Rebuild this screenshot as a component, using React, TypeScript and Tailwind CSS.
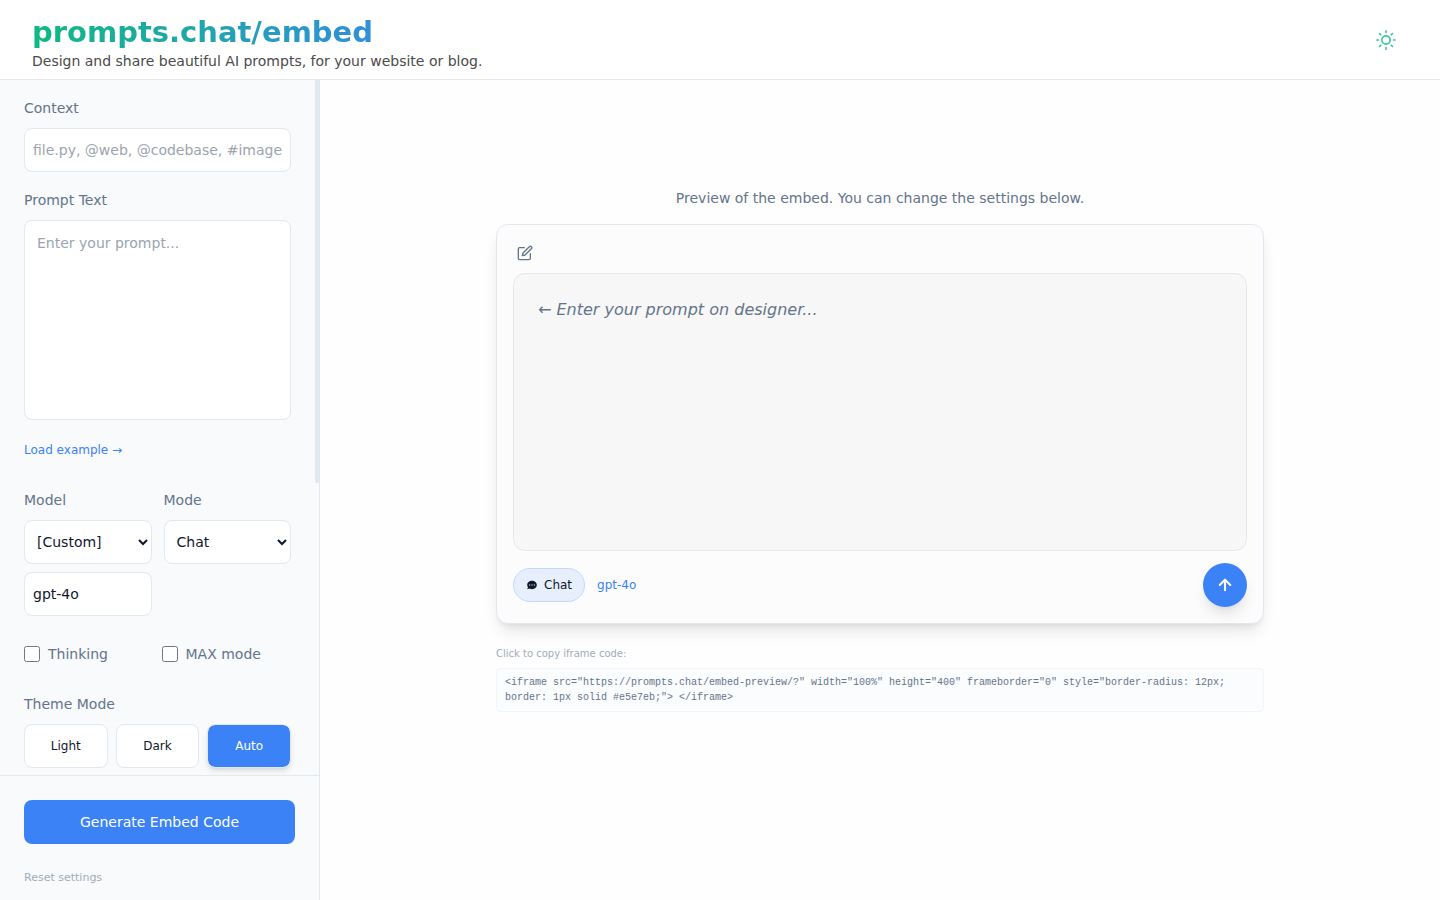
import React, { useState } from 'react';
import { ArrowUp } from 'lucide-react';
import { FiEdit, FiSun } from 'react-icons/fi';

const THEME_MODES = ['Light', 'Dark', 'Auto'];

const EMBED_CODE =
  '<iframe src="https://prompts.chat/embed-preview/?" width="100%" height="400" frameborder="0" style="border-radius: 12px; border: 1px solid #e5e7eb;"> </iframe>';

const labelClass = 'block mb-2 text-sm leading-6 text-[#64748b]';
const fieldClass =
  'block w-full h-11 rounded-lg border border-[#e2e8f0] bg-white text-sm text-[#0f172a] placeholder:text-[#9ca3af]';

function ChatIcon() {
  return (
    <svg className="h-3 w-3" viewBox="0 0 20 20" fill="currentColor" aria-hidden="true">
      <path
        fillRule="evenodd"
        clipRule="evenodd"
        d="M18 10c0 3.87-3.58 7-8 7a8.84 8.84 0 0 1-4.08-.98L2 17l1.34-3.12C2.5 12.77 2 11.43 2 10c0-3.87 3.58-7 8-7s8 3.13 8 7zM7 9H5v2h2V9zm8 0h-2v2h2V9zM9 9h2v2H9V9z"
      />
    </svg>
  );
}

function Header() {
  return (
    <header className="flex h-20 shrink-0 items-center justify-between border-b border-[#e5e7eb] bg-white px-8">
      <div className="pt-1.5">
        <h1 className="bg-[linear-gradient(to_right,#10b981,#3b82f6)] bg-clip-text text-[29px] leading-9 font-bold text-transparent">
          prompts.chat/embed
        </h1>
        <p className="text-sm leading-[22px] text-[#4a4a4a]">
          Design and share beautiful AI prompts, for your website or blog.
        </p>
      </div>
      <button aria-label="Toggle theme" className="p-3 text-[#10b981] opacity-80">
        <FiSun className="h-5 w-5" />
      </button>
    </header>
  );
}

function SettingsForm() {
  const [themeMode, setThemeMode] = useState('Auto');
  const [model, setModel] = useState('gpt-4o');

  return (
    <div className="min-w-0 flex-1 overflow-y-auto px-6 pt-4">
      <div className="mb-4">
        <label htmlFor="context" className={labelClass}>Context</label>
        <input id="context" className={`${fieldClass} px-2`} placeholder="file.py, @web, @codebase, #image" />
      </div>

      <div className="mb-5">
        <label htmlFor="prompt" className={labelClass}>Prompt Text</label>
        <textarea
          id="prompt"
          placeholder="Enter your prompt..."
          className="block h-50 w-full resize-none rounded-lg border border-[#e2e8f0] bg-white p-3 text-sm text-[#0f172a] placeholder:text-[#9ca3af]"
        />
      </div>

      <button className="mb-7 block text-xs leading-5 text-[#3b82f6]">Load example →</button>

      <div className="mb-7 grid grid-cols-2 gap-3">
        <div>
          <label htmlFor="model" className={labelClass}>Model</label>
          <select id="model" className={`${fieldClass} px-2`}>
            <option>[Custom]</option>
          </select>
          <input
            aria-label="Custom model name"
            value={model}
            onChange={(e) => setModel(e.target.value)}
            className={`${fieldClass} mt-2 px-2`}
          />
        </div>
        <div>
          <label htmlFor="mode" className={labelClass}>Mode</label>
          <select id="mode" className={`${fieldClass} px-2`}>
            <option>Chat</option>
          </select>
        </div>
      </div>

      <div className="mb-7 grid grid-cols-2 gap-2">
        <label className="flex items-center gap-2 text-sm text-[#64748b]">
          <input type="checkbox" className="h-4 w-4" />
          Thinking
        </label>
        <label className="flex items-center gap-2 text-sm text-[#64748b]">
          <input type="checkbox" className="h-4 w-4" />
          MAX mode
        </label>
      </div>

      <div className="pb-1.5">
        <span className={labelClass}>Theme Mode</span>
        <div className="grid grid-cols-3 gap-2">
          {THEME_MODES.map((mode) => (
            <button
              key={mode}
              onClick={() => setThemeMode(mode)}
              className={`h-11 rounded-lg border text-xs ${
                mode === themeMode
                  ? 'border-[#e2e8f0] bg-[#3b82f6] bg-clip-padding text-white shadow-md'
                  : 'border-[#e2e8f0] bg-white text-[#0f172a]'
              }`}
            >
              {mode}
            </button>
          ))}
        </div>
      </div>
    </div>
  );
}

function Sidebar() {
  return (
    <aside className="flex w-80 shrink-0 flex-col border-r border-[#e2e8f0] bg-[#f8fafc]">
      <div className="flex min-h-0 flex-1">
        <SettingsForm />
        {/* Slim scroll thumb */}
        <div className="w-1 shrink-0">
          <div className="h-[58%] rounded-b-sm bg-[#e2e8f0]" />
        </div>
      </div>

      <div className="border-t border-[#e2e8f0] px-6 pt-6 pb-3.5">
        <button className="h-11 w-full rounded-lg bg-[#3b82f6] text-sm text-white">Generate Embed Code</button>
        <button className="mt-6.5 block text-[11px] leading-4 text-[#a2acb9]">Reset settings</button>
      </div>
    </aside>
  );
}

function Preview() {
  return (
    <main className="min-w-0 flex-1 bg-[#fefefe] px-8 pt-27">
      <div className="mx-auto max-w-3xl">
        <p className="mb-4 text-center text-sm text-[#64748b]">
          Preview of the embed. You can change the settings below.
        </p>

        <div className="flex h-100 flex-col rounded-xl border border-[#e2e8f0] bg-[#fcfcfc] p-4 shadow-lg">
          <button aria-label="Edit prompt" className="mb-2 self-start p-1 text-[#64748b]">
            <FiEdit className="h-4 w-4" />
          </button>
          <div className="flex-1 rounded-xl border border-[#e5e7eb] bg-[#f7f7f7] p-6 text-base text-[#64748b] italic">
            ← Enter your prompt on designer...
          </div>
          <div className="mt-3 flex items-center gap-3">
            <span className="flex items-center gap-1.5 rounded-full border border-[#c3d9fc] bg-[#e8effc] px-3 py-2 text-xs text-[#0f172a]">
              <ChatIcon />
              Chat
            </span>
            <span className="text-xs text-[#3b82f6]">gpt-4o</span>
            <button
              aria-label="Send"
              className="ml-auto flex h-11 w-11 items-center justify-center rounded-full bg-[#3b82f6] text-white shadow-lg"
            >
              <ArrowUp className="h-4.5 w-4.5" strokeWidth={2.75} />
            </button>
          </div>
        </div>

        <p className="mt-5.5 mb-1.5 text-[10px] leading-4 text-[#a2acb9]">Click to copy iframe code:</p>
        <button className="block w-full rounded border border-[#f1f5f9] bg-[#fbfcfe] px-2 py-1.5 text-left font-['Liberation_Mono',monospace] text-[10px] leading-[15px] text-[#64748b]">
          {EMBED_CODE}
        </button>
      </div>
    </main>
  );
}

export default function App() {
  return (
    <div className="flex h-screen flex-col bg-white font-['DejaVu_Sans',sans-serif]">
      <Header />
      <div className="flex min-h-0 flex-1">
        <Sidebar />
        <Preview />
      </div>
    </div>
  );
}
